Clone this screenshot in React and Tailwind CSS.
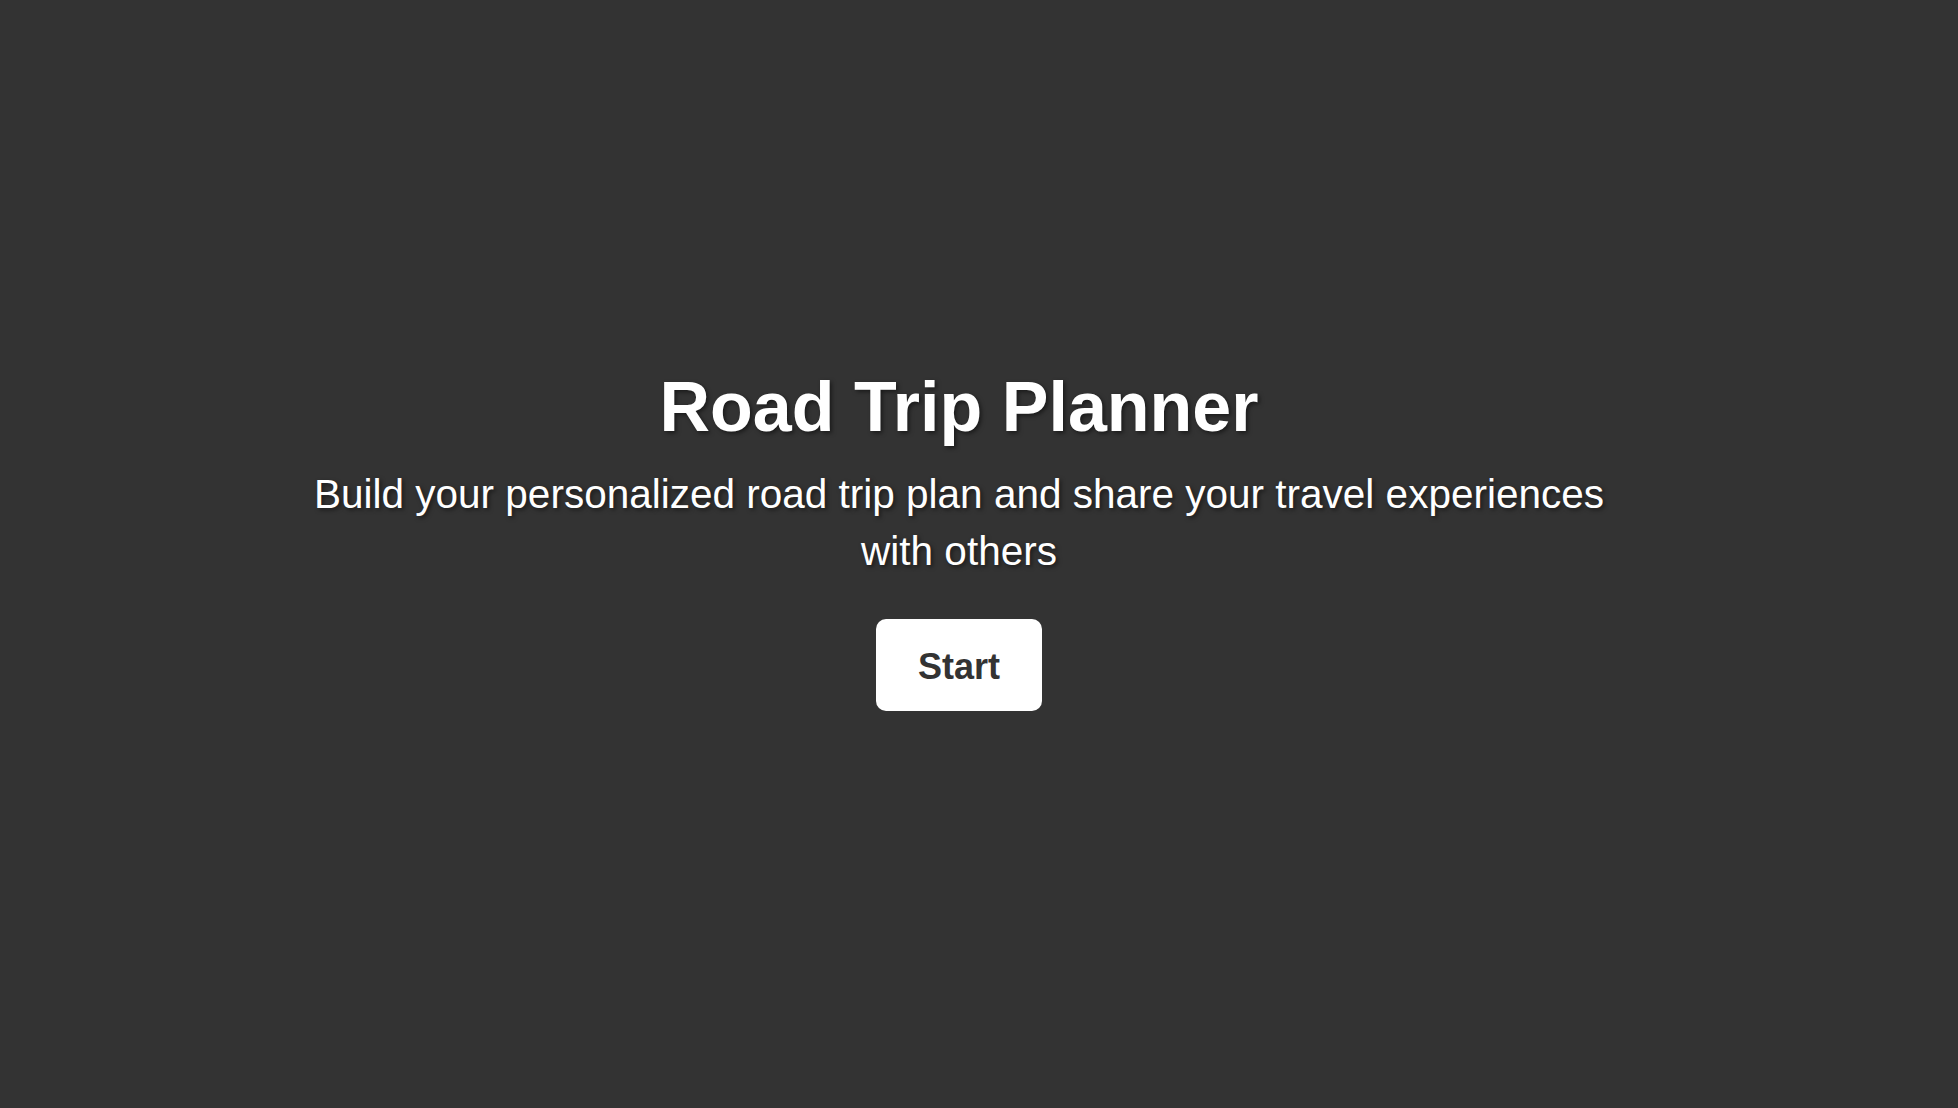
import React from "react";

const App = () => {
  return (
    <div className="min-h-screen w-full bg-[#333333] flex items-center justify-center pr-[40px] pb-[32px] font-['Liberation_Sans',Arial,sans-serif]">
      <div className="flex flex-col items-center text-center text-white max-w-[1320px]">
        <h1 className="text-[70px] leading-[1.2] font-bold [text-shadow:2px_2px_4px_rgba(0,0,0,0.5)]">
          Road Trip Planner
        </h1>
        <p className="mt-[17px] text-[40.5px] leading-[57px] [text-shadow:2px_2px_4px_rgba(0,0,0,0.5)]">
          Build your personalized road trip plan and share your travel experiences
          with others
        </p>
        <button
          title="Start"
          className="mt-[39px] h-[92px] px-[42px] pt-[4px] bg-white text-[#333333] rounded-[10px] text-[36px] font-bold"
        >
          Start
        </button>
      </div>
    </div>
  );
};

export default App;
